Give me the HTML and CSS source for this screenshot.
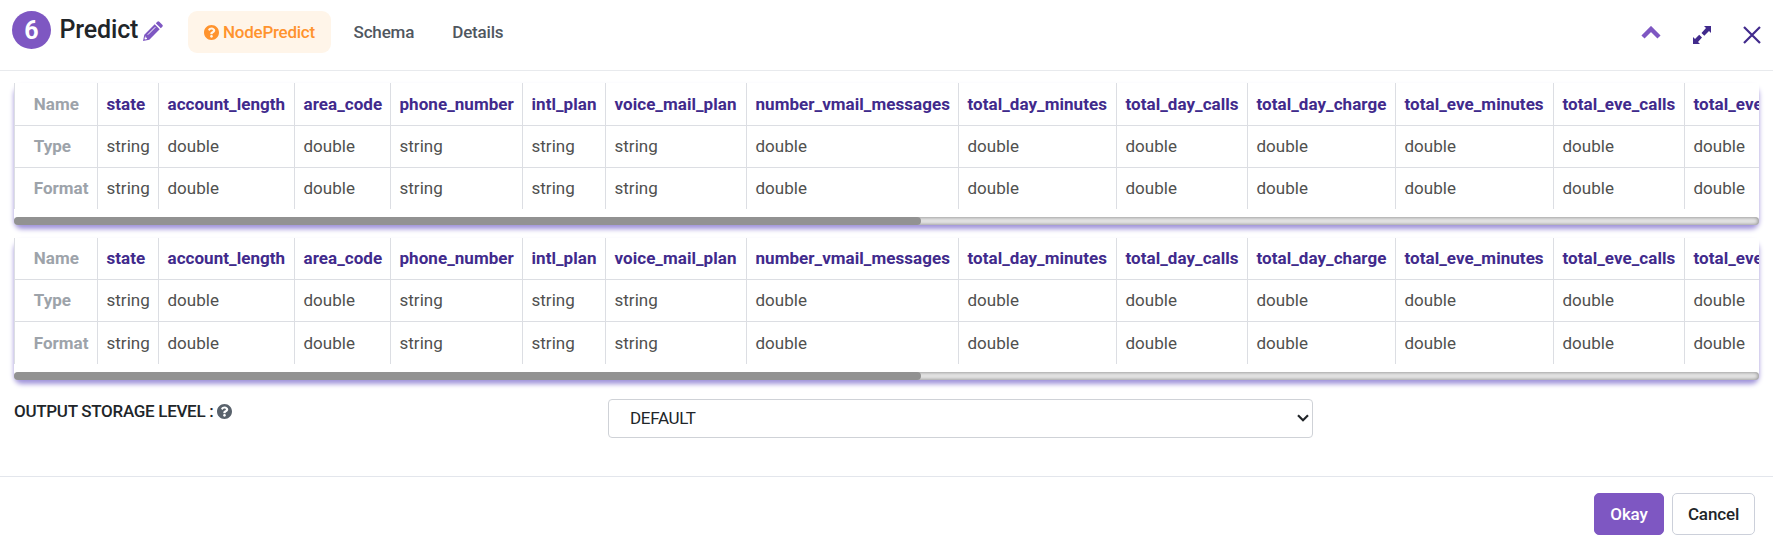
FILE: index.html
```
<!DOCTYPE html>
<html lang="en">
<head>
<meta charset="utf-8">
<title>Predict</title>
<link rel="stylesheet" href="styles.css">
</head>
<body>
<svg class="defs" width="0" height="0"><defs>
<symbol id="question" viewBox="8 8 496 496"><path d="M504 256c0 137-111 248-248 248S8 393 8 256 119 8 256 8s248 111 248 248zM262.700 90c-54.500 0-89.300 23-116.500 63.800-3.500 5.300-2.400 12.400 2.700 16.300l34.700 26.300c5.200 3.900 12.600 3 16.700-2.100 17.900-22.700 30.100-35.800 57.300-35.800 20.400 0 45.700 13.100 45.700 33 0 15-12.400 22.700-32.500 34C247.100 238.500 216 254.900 216 296v4c0 6.600 5.400 12 12 12h56c6.600 0 12-5.400 12-12v-1.300c0-28.500 83.200-29.600 83.200-106.700 0-58-60.200-102-116.500-102zM256 338c-25.400 0-46 20.600-46 46s20.600 46 46 46 46-20.600 46-46-20.600-46-46-46z"/></symbol>
</defs></svg>
<div class="dialog">
  <header class="header">
    <span class="badge">6</span>
    <h1 class="title">Predict</h1>
    <svg class="pencil" viewBox="0 0 20 20"><path d="M0 20l1.300-6.300L11.700 3.300l5 5L6.300 18.700zM12.800 2.200L14.300.7q1-1 2 0l3 3q1 1 0 2l-1.500 1.500z"/><path d="M4.800 13.700L12.300 6.200" stroke="#fff" stroke-width="1"/><path d="M2.200 14.800l.3 1.700 1.300.2.200 1.400-2 .5-.5-.6z" fill="#fff"/></svg>
    <nav class="tabs">
      <a class="tab active"><svg class="help"><use href="#question"/></svg>NodePredict</a>
      <a class="tab">Schema</a>
      <a class="tab">Details</a>
    </nav>
    <div class="tools">
      <svg class="chevron" viewBox="0 0 20 13"><path d="M2 11l8-8 8 8" fill="none" stroke="#7e57c2" stroke-width="4.400"/></svg>
      <svg class="expand" viewBox="0 0 18 18"><path d="M11 0H18v7l-2-2-4.700 4.700-2.800-2.800L13 2zM7 18H0v-7l2 2 4.200-4.200 2.800 2.800L5 16z"/></svg>
      <svg class="close" viewBox="0 0 18 18"><path d="M1 1l16 16M17 1L1 17" stroke="#412a8c" stroke-width="2.200"/></svg>
    </div>
  </header>
  <main class="content">
    <section class="panel first">
      <div class="scroller"><table class="schema">
        <colgroup><col class="c0"><col class="c1"><col class="c2"><col class="c3"><col class="c4"><col class="c5"><col class="c6"><col class="c7"><col class="c8"><col class="c9"><col class="c10"><col class="c11"><col class="c12"><col class="c13"></colgroup>
        <tr class="names"><th>Name</th><td>state</td><td>account_length</td><td>area_code</td><td>phone_number</td><td>intl_plan</td><td>voice_mail_plan</td><td>number_vmail_messages</td><td>total_day_minutes</td><td>total_day_calls</td><td>total_day_charge</td><td>total_eve_minutes</td><td>total_eve_calls</td><td>total_eve_charge</td></tr>
        <tr><th>Type</th><td>string</td><td>double</td><td>double</td><td>string</td><td>string</td><td>string</td><td>double</td><td>double</td><td>double</td><td>double</td><td>double</td><td>double</td><td>double</td></tr>
        <tr><th>Format</th><td>string</td><td>double</td><td>double</td><td>string</td><td>string</td><td>string</td><td>double</td><td>double</td><td>double</td><td>double</td><td>double</td><td>double</td><td>double</td></tr>
      </table></div>
      <div class="track"><div class="thumb"></div></div>
    </section>
    <section class="panel">
      <div class="scroller"><table class="schema">
        <colgroup><col class="c0"><col class="c1"><col class="c2"><col class="c3"><col class="c4"><col class="c5"><col class="c6"><col class="c7"><col class="c8"><col class="c9"><col class="c10"><col class="c11"><col class="c12"><col class="c13"></colgroup>
        <tr class="names"><th>Name</th><td>state</td><td>account_length</td><td>area_code</td><td>phone_number</td><td>intl_plan</td><td>voice_mail_plan</td><td>number_vmail_messages</td><td>total_day_minutes</td><td>total_day_calls</td><td>total_day_charge</td><td>total_eve_minutes</td><td>total_eve_calls</td><td>total_eve_charge</td></tr>
        <tr><th>Type</th><td>string</td><td>double</td><td>double</td><td>string</td><td>string</td><td>string</td><td>double</td><td>double</td><td>double</td><td>double</td><td>double</td><td>double</td><td>double</td></tr>
        <tr><th>Format</th><td>string</td><td>double</td><td>double</td><td>string</td><td>string</td><td>string</td><td>double</td><td>double</td><td>double</td><td>double</td><td>double</td><td>double</td><td>double</td></tr>
      </table></div>
      <div class="track"><div class="thumb"></div></div>
    </section>
    <div class="field">
      <label class="label">OUTPUT STORAGE LEVEL : <svg class="help"><use href="#question"/></svg></label>
      <div class="select"><span>DEFAULT</span><svg class="caret" viewBox="0 0 12 8"><path d="M1 1.200l5 5 5-5" fill="none" stroke="#212529" stroke-width="2.200"/></svg></div>
    </div>
  </main>
  <footer class="footer">
    <button class="btn primary">Okay</button>
    <button class="btn">Cancel</button>
  </footer>
</div>
</body>
</html>
```
FILE: styles.css
```
* { box-sizing: border-box; }
body { margin: 0; background: #fff; font-family: Roboto, sans-serif; font-size: 17px; color: #212529; overflow: hidden; }
.defs { display: block; height: 0; }
.dialog { height: 547px; display: flex; flex-direction: column; }
.header { height: 71px; flex: none; display: flex; align-items: flex-start; border-bottom: 1px solid #e8eaed; padding: 11px 8px 0 12px; }
.badge { width: 39px; height: 38px; border-radius: 50%; background: #7e57c2; color: #fff; font-weight: 700; font-size: 25px; line-height: 39px; text-align: center; }
.title { margin: 0 0 0 8.500px; width: 83.500px; font-size: 25px; letter-spacing: -.15px; font-weight: 500; line-height: 38px; white-space: nowrap; }
.pencil { width: 20px; height: 20px; margin-top: 10px; fill: #7e57c2; }
.tabs { display: flex; margin-left: 25px; }
.tab { height: 42px; line-height: 42px; font-weight: 500; letter-spacing: -.15px; color: #50575f; padding: 0 22px; white-space: nowrap; margin-right: 10px; }
.tab + .tab { padding: 0; margin: 0 38px 0 12.500px; }
.tab + .tab + .tab { margin-left: 0; letter-spacing: -.2px; }
.tab.active { display: flex; align-items: center; width: 143px; margin-right: 10px; padding: 0 0 0 16px; border-radius: 9px; background: #fff5e9; color: #ff932e; letter-spacing: -.25px; }
.help { width: 15px; height: 15px; fill: currentColor; flex: none; }
.tab .help { margin-right: 4px; }
.tools { margin-left: auto; display: flex; align-items: center; height: 47px; }
.chevron { width: 20px; height: 13px; margin-right: 32px; margin-top: -5px; }
.expand { width: 18px; height: 18px; fill: #412a8c; margin-right: 32px; }
.close { width: 18px; height: 18px; margin-right: 4px; }
.content { flex: none; height: 405px; padding: 12px 14px 0; }
.panel { height: 142px; margin-bottom: 13px; border-radius: 8px; box-shadow: 0 4px 5px #a094da; background: #fff; }
.scroller { height: 134px; overflow: hidden; background: #fff; }
.schema { table-layout: fixed; width: 1822px; border-collapse: separate; border-spacing: 0; }
.schema th, .schema td { height: 42px; padding: 0 0 1px 8.500px; border-right: 1px solid #dcdee3; border-bottom: 1px solid #dcdee3; text-align: left; white-space: nowrap; color: #50504f; letter-spacing: .01px; }
.schema th { color: #9da3aa; padding-left: 18.800px; border-left: 1px solid #dcdee3; }
.schema tr:last-child > * { border-bottom: 0; }
.schema .names td { color: #412a8c; font-weight: 700; letter-spacing: .05px; }
.first .names > * { height: 43px; }
.first .schema tr:last-child > * { height: 41px; }
.c0 { width: 84px; }
.c1 { width: 61px; }
.c2 { width: 136px; }
.c3 { width: 96px; }
.c4 { width: 132px; }
.c5 { width: 83px; }
.c6 { width: 141px; }
.c7 { width: 212px; }
.c8 { width: 158px; }
.c9 { width: 131px; }
.c10 { width: 148px; }
.c11 { width: 158px; }
.c12 { width: 131px; }
.c13 { width: 151px; }
.track { height: 8px; border-radius: 5px; background: #e8e8e8; box-shadow: inset 0 0 4px #777; overflow: hidden; }
.thumb { width: 907px; height: 8px; border-radius: 5px; background: #929292; }
.field { display: flex; }
.label { width: 594px; padding-top: 8px; font-weight: 500; line-height: 20px; display: flex; align-items: center; height: 28px; gap: 4px; letter-spacing: -.3px; }
.label .help { color: #59626c; }
.select { width: 705px; height: 39px; margin-top: 6px; border: 1px solid #cfd2d7; border-radius: 4px; display: flex; align-items: center; justify-content: space-between; padding: 0 3px 1px 21px; letter-spacing: -.3px; }
.caret { width: 12px; height: 8px; }
.footer { flex: 1; border-top: 1px solid #e3e6ec; display: flex; justify-content: flex-end; padding: 16px 18px 0 0; gap: 8px; }
.btn { width: 83px; height: 42px; padding: 0; border: 1px solid #ccd0da; border-radius: 5px; background: #fff; font: 500 17px Roboto, sans-serif; letter-spacing: -.15px; color: #212529; }
.btn.primary { width: 70px; border-color: #7e57c2; background: #7e57c2; color: #fff; }
```
